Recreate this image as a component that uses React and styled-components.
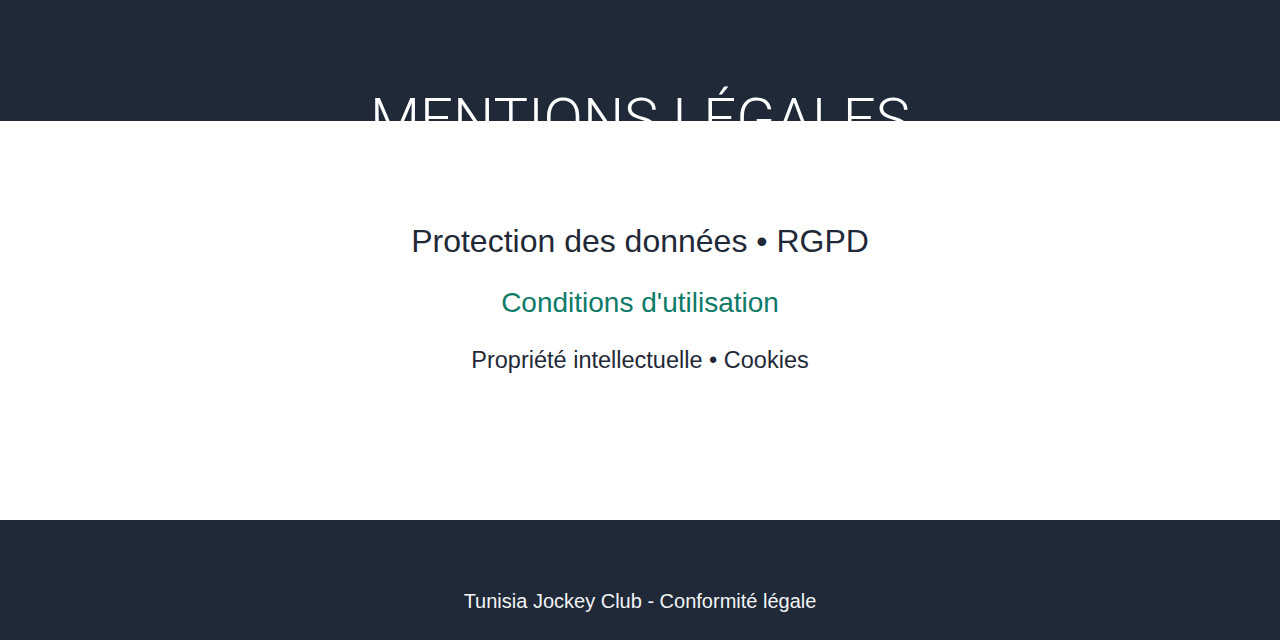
import styled, { createGlobalStyle } from 'styled-components';

const GlobalStyle = createGlobalStyle`
  body {
    margin: 0;
    background: #ffffff;
    font-family: "Liberation Sans", Arial, sans-serif;
  }
`;

function App() {
  return (
    <>
      <GlobalStyle />
      <Page>
        <Header>
          <Title>MENTIONS LÉGALES</Title>
        </Header>
        <Main>
          <Lead>Protection des données • RGPD</Lead>
          <Accent>Conditions d'utilisation</Accent>
          <Detail>Propriété intellectuelle • Cookies</Detail>
        </Main>
        <Footer>
          <FooterText>Tunisia Jockey Club - Conformité légale</FooterText>
        </Footer>
      </Page>
    </>
  );
}

const Page = styled.div`
  display: flex;
  flex-direction: column;
  min-height: 100vh;
`;

const Header = styled.header`
  height: 121px;
  overflow: hidden;
  background: #1f2937;
  padding-top: 85px;
  box-sizing: border-box;
  text-align: center;
`;

const Title = styled.h1`
  margin: 0;
  font-family: Roboto, "Liberation Sans", sans-serif;
  font-weight: 300;
  font-size: 58px;
  line-height: 1.2;
  color: #ffffff;
`;

const Main = styled.main`
  height: 399px;
  box-sizing: border-box;
  padding-top: 96px;
  display: flex;
  flex-direction: column;
  align-items: center;
  background: #ffffff;
`;

const Lead = styled.h2`
  margin: 0;
  font-size: 32px;
  font-weight: 400;
  line-height: 1.5;
  color: #1f2937;
`;

const Accent = styled.h3`
  margin: 17px 0 0;
  font-size: 28px;
  font-weight: 400;
  line-height: 1.5;
  color: #0e7a68;
`;

const Detail = styled.p`
  margin: 19px 0 0;
  font-size: 23.5px;
  line-height: 1.5;
  color: #1f2937;
`;

const Footer = styled.footer`
  flex: 1;
  background: #1f2937;
  padding-top: 66px;
  text-align: center;
`;

const FooterText = styled.p`
  margin: 0;
  font-size: 20px;
  line-height: 1.5;
  color: #f3f4f6;
`;

export default App;
